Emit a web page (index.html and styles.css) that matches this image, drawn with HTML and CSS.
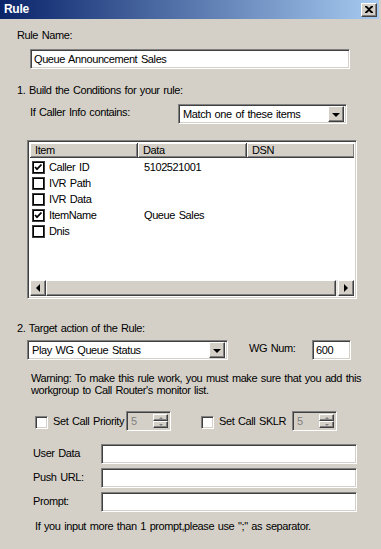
FILE: index.html
```html
<!DOCTYPE html>
<html lang="en">
<head>
    <meta charset="UTF-8">
    <title>Rule</title>
    <link rel="stylesheet" href="styles.css">
</head>
<body>
    <div class="window">
        <div class="titlebar">
            <span class="title">Rule</span>
            <div class="close-btn raised">
                <svg width="8" height="7" viewBox="0 0 8 7"><path d="M0 0h2l2 2 2-2h2v1L5 3.5 8 6v1H6L4 5 2 7H0V6l3-2.5L0 1z" fill="#000"/></svg>
            </div>
        </div>

        <div class="name-label">Rule Name:</div>
        <div class="edit name-edit sunken">Queue Announcement Sales</div>

        <div class="section-title">1. Build the Conditions for your rule:</div>
        <div class="cond-row">
            <span class="cond-label">If Caller Info contains:</span>
            <div class="combo cond-combo sunken">
                <span class="combo-text">Match one of these items</span>
                <div class="combo-btn raised"><span class="arrow-down"></span></div>
            </div>
        </div>

        <div class="listview sunken">
            <div class="lv-header">
                <div class="hcell">Item</div>
                <div class="hcell">Data</div>
                <div class="hcell last">DSN</div>
            </div>
            <div class="lv-body">
                <div class="lv-row">
                    <div class="lv-item"><span class="lv-check checked"><svg width="9" height="9" viewBox="0 0 9 9"><path d="M1 4l2 2.2L7.5 1.5" fill="none" stroke="#000" stroke-width="1.8"/></svg></span>Caller ID</div>
                    <div class="lv-data">5102521001</div>
                </div>
                <div class="lv-row">
                    <div class="lv-item"><span class="lv-check"></span>IVR Path</div>
                    <div class="lv-data"></div>
                </div>
                <div class="lv-row">
                    <div class="lv-item"><span class="lv-check"></span>IVR Data</div>
                    <div class="lv-data"></div>
                </div>
                <div class="lv-row">
                    <div class="lv-item"><span class="lv-check checked"><svg width="9" height="9" viewBox="0 0 9 9"><path d="M1 4l2 2.2L7.5 1.5" fill="none" stroke="#000" stroke-width="1.8"/></svg></span>ItemName</div>
                    <div class="lv-data">Queue Sales</div>
                </div>
                <div class="lv-row">
                    <div class="lv-item"><span class="lv-check"></span>Dnis</div>
                    <div class="lv-data"></div>
                </div>
            </div>
            <div class="hscroll">
                <div class="sb-btn raised"><span class="arrow-left"></span></div>
                <div class="sb-thumb raised"></div>
                <div class="sb-track"></div>
                <div class="sb-btn raised"><span class="arrow-right"></span></div>
            </div>
        </div>

        <div class="section-title second">2. Target action of the Rule:</div>
        <div class="action-row">
            <div class="combo action-combo sunken">
                <span class="combo-text">Play WG Queue Status</span>
                <div class="combo-btn raised"><span class="arrow-down"></span></div>
            </div>
            <span class="wg-label">WG Num:</span>
            <div class="edit wg-edit sunken">600</div>
        </div>

        <p class="warning">Warning: To make this rule work, you must make sure that you add this<br>workgroup to Call Router's monitor list.</p>

        <div class="opts-row">
            <div class="opt">
                <span class="checkbox sunken"></span>
                <span class="opt-label">Set Call Priority</span>
                <div class="spinner sunken">
                    <span class="spin-text">5</span>
                    <div class="spin-btns">
                        <div class="spin-btn raised"><span class="tiny-up"></span></div>
                        <div class="spin-btn raised"><span class="tiny-down"></span></div>
                    </div>
                </div>
            </div>
            <div class="opt">
                <span class="checkbox sunken"></span>
                <span class="opt-label">Set Call SKLR</span>
                <div class="spinner sunken">
                    <span class="spin-text">5</span>
                    <div class="spin-btns">
                        <div class="spin-btn raised"><span class="tiny-up"></span></div>
                        <div class="spin-btn raised"><span class="tiny-down"></span></div>
                    </div>
                </div>
            </div>
        </div>

        <div class="fields">
            <span class="field-label">User Data</span>
            <div class="edit field-edit sunken"></div>
            <span class="field-label">Push URL:</span>
            <div class="edit field-edit sunken"></div>
            <span class="field-label">Prompt:</span>
            <div class="edit field-edit sunken"></div>
        </div>

        <p class="hint">If you input more than 1 prompt,please use ";" as separator.</p>
    </div>
</body>
</html>
```
FILE: styles.css
```css
body {
    margin: 0;
    background-color: #d4d0c8;
}
.window {
    width: 381px;
    height: 549px;
    background-color: #d4d0c8;
    font-family: "Liberation Sans", Arial, sans-serif;
    font-size: 11px;
    line-height: 13px;
    letter-spacing: -0.4px;
    word-spacing: 1px;
    color: #000;
    overflow: hidden;
    white-space: nowrap;
}
.sunken {
    box-sizing: border-box;
    border: 1px solid;
    border-color: #808080 #fff #fff #808080;
    box-shadow: inset 1px 1px #404040, inset -1px -1px #d4d0c8;
}
.raised {
    box-sizing: border-box;
    background-color: #d4d0c8;
    border: 1px solid;
    border-color: #fff #404040 #404040 #fff;
    box-shadow: inset -1px -1px #808080, inset 1px 1px #d4d0c8;
}

/* title bar */
.titlebar {
    height: 19px;
    margin-right: 2px;
    padding: 0 2px 0 4px;
    display: flex;
    align-items: center;
    justify-content: space-between;
    background: linear-gradient(to right, #0a246a, #a6caf0);
}
.title {
    color: #fff;
    font-weight: bold;
    font-size: 12px;
    letter-spacing: -0.3px;
}
.close-btn {
    width: 16px;
    height: 14px;
    display: flex;
    align-items: center;
    justify-content: center;
}

/* generic controls */
.edit {
    height: 20px;
    background-color: #fff;
    padding: 3px 3px 0 3px;
}
.combo {
    height: 20px;
    background-color: #fff;
    display: flex;
    align-items: center;
    padding: 2px;
}
.combo-text {
    flex: 1;
    padding-left: 2px;
}
.combo-btn {
    width: 16px;
    height: 16px;
    display: flex;
    align-items: center;
    justify-content: center;
}
.arrow-down {
    width: 0;
    height: 0;
    border-left: 4px solid transparent;
    border-right: 4px solid transparent;
    border-top: 4px solid #000;
    margin-top: 1px;
}
.arrow-left {
    width: 0;
    height: 0;
    border-top: 4px solid transparent;
    border-bottom: 4px solid transparent;
    border-right: 4px solid #000;
}
.arrow-right {
    width: 0;
    height: 0;
    border-top: 4px solid transparent;
    border-bottom: 4px solid transparent;
    border-left: 4px solid #000;
}

/* top section */
.name-label {
    margin: 10px 0 0 17px;
}
.name-edit {
    margin: 7px 0 0 30px;
    width: 320px;
}
.section-title {
    margin: 15px 0 0 17px;
}
.section-title.second {
    margin-top: 23px;
}
.cond-row {
    margin: 7px 0 0 30px;
    height: 20px;
    display: flex;
    align-items: center;
}
.cond-label {
    width: 148px;
    margin-top: -3px;
}
.cond-combo {
    width: 169px;
}

/* list view */
.listview {
    margin: 16px 0 0 27px;
    width: 330px;
    height: 159px;
    background-color: #fff;
    padding: 2px;
    display: flex;
    flex-direction: column;
}
.lv-header {
    height: 15px;
    display: grid;
    grid-template-columns: 108px 109px 1fr;
}
.hcell {
    box-sizing: border-box;
    background-color: #d4d0c8;
    border-right: 1px solid #404040;
    border-bottom: 1px solid #404040;
    box-shadow: inset 1px 1px #fff, inset -1px -1px #808080;
    padding: 1px 0 0 5px;
}
.hcell.last {
    border-right: none;
}
.lv-body {
    flex: 1;
    padding-top: 1px;
}
.lv-row {
    height: 16px;
    display: grid;
    grid-template-columns: 108px 1fr;
    align-items: center;
}
.lv-item {
    display: flex;
    align-items: center;
    padding-left: 2px;
}
.lv-data {
    padding-left: 6px;
}
.lv-check {
    width: 13px;
    height: 13px;
    box-sizing: border-box;
    border: 1px solid #404040;
    box-shadow: inset 0 0 0 1px #000;
    background-color: #fff;
    margin-right: 4px;
    display: flex;
    align-items: center;
    justify-content: center;
}
.hscroll {
    height: 16px;
    display: flex;
    background-color: #ebe9e5;
}
.sb-btn {
    width: 16px;
    height: 16px;
    display: flex;
    align-items: center;
    justify-content: center;
}
.sb-thumb {
    flex: 1;
}
.sb-track {
    width: 2px;
}

/* action section */
.action-row {
    margin: 5px 0 0 27px;
    height: 20px;
    display: flex;
    align-items: center;
}
.action-combo {
    width: 201px;
}
.wg-label {
    margin-left: 21px;
    width: 63px;
    margin-top: -3px;
}
.wg-edit {
    width: 39px;
}
.warning {
    margin: 12px 0 0 31px;
    line-height: 12px;
}
.opts-row {
    margin: 15px 0 0 35px;
    height: 20px;
    display: flex;
    gap: 30px;
}
.opt {
    width: 136px;
    display: flex;
    align-items: center;
}
.checkbox {
    width: 13px;
    height: 13px;
    background-color: #fff;
    margin: 3px 5px 0 0;
}
.opt-label {
    margin-top: 1px;
}
.spinner {
    width: 45px;
    height: 20px;
    margin-left: auto;
    display: flex;
    padding: 2px;
    background-color: #d4d0c8;
}
.spin-text {
    flex: 1;
    color: #808080;
    padding: 1px 0 0 2px;
}
.spin-btns {
    width: 15px;
    display: flex;
    flex-direction: column;
}
.spin-btn {
    flex: 1;
    display: flex;
    align-items: center;
    justify-content: center;
}
.tiny-up {
    width: 0;
    height: 0;
    border-left: 2px solid transparent;
    border-right: 2px solid transparent;
    border-bottom: 2px solid #808080;
}
.tiny-down {
    width: 0;
    height: 0;
    border-left: 2px solid transparent;
    border-right: 2px solid transparent;
    border-top: 2px solid #808080;
}
.fields {
    margin: 13px 0 0 33px;
    display: grid;
    grid-template-columns: 68px 256px;
    row-gap: 4px;
    align-items: center;
}
.field-label {
    margin-top: -2px;
}
.hint {
    margin: 8px 0 0 35px;
}
```
